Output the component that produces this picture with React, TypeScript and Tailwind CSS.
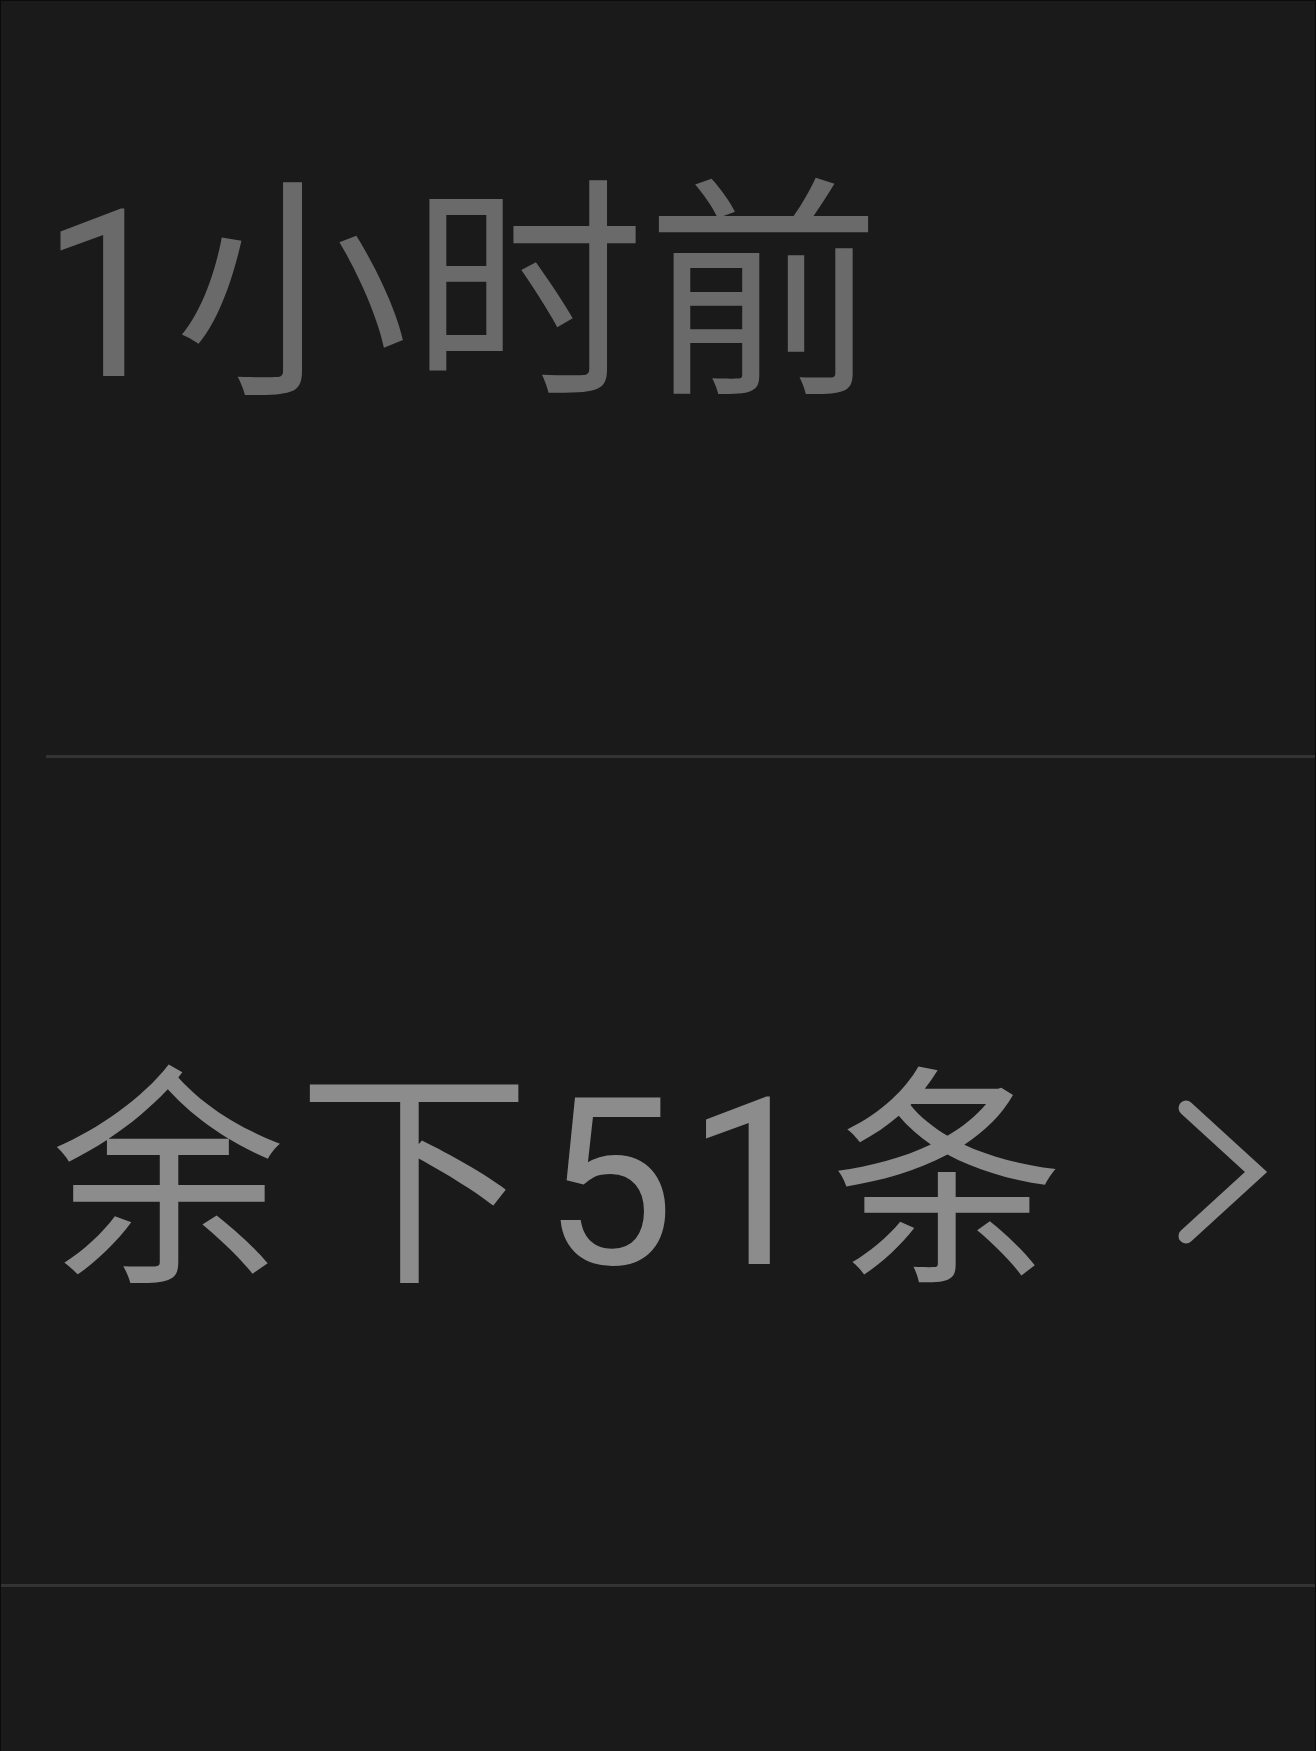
import React from "react";

export default function App() {
  return (
    <div
      className="w-[1316px] h-[1751px] overflow-hidden bg-[#1a1a1a] border-l border-t border-r border-[#0b0b0b]"
      style={{ fontFamily: 'Roboto, "Noto Sans CJK SC", sans-serif' }}
    >
      <div className="h-[754px] pl-[40px] pt-[178px]">
        <div className="text-[234px] leading-none tracking-[2px] text-[#6a6a6a]">1小时前</div>
      </div>
      <div className="ml-[45px] h-[3px] bg-[#333333]" />
      <div className="h-[826px] flex items-center pl-[50px] pt-[26px]">
        <div className="text-[234px] leading-none tracking-[12px] text-[#8c8c8c]">余下51条</div>
        <svg
          className="ml-[96px] mb-[24px]"
          width="100"
          height="160"
          viewBox="0 0 100 160"
          fill="none"
        >
          <polyline
            points="14,16 84,80 14,144"
            stroke="#8c8c8c"
            strokeWidth="15"
            strokeLinecap="round"
            strokeLinejoin="miter"
          />
        </svg>
      </div>
      <div className="h-[3px] bg-[#333333]" />
    </div>
  );
}
